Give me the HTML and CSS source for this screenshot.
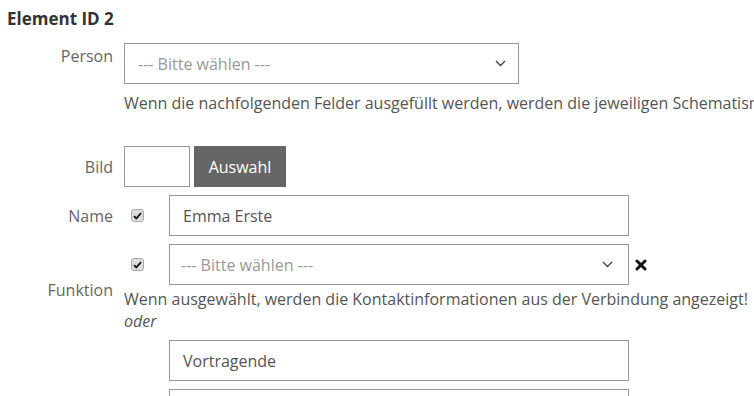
FILE: index.html
```html
<!DOCTYPE html>
<html>
  <head>
    <title>Element ID 2</title>
    <meta name="viewport" content="width=device-width, initial-scale=1">
    <link rel="stylesheet" href="styles.css">
  </head>
  <body>
    <h1 class="title">Element ID 2</h1>

    <div class="form-row top">
      <label class="label">Person</label>
      <div class="field">
        <div class="select person-select">
          <span class="placeholder">--- Bitte wählen ---</span>
          <svg class="chevron" width="11" height="7" viewBox="0 0 11 7"><path d="M1 1l4.5 4.5L10 1" fill="none" stroke="#444" stroke-width="1.4"/></svg>
        </div>
        <p class="help">Wenn die nachfolgenden Felder ausgefüllt werden, werden die jeweiligen Schematismus-Daten überschrieben.</p>
      </div>
    </div>

    <div class="form-row center bild-row">
      <label class="label">Bild</label>
      <div class="field image-field">
        <div class="image-box"></div>
        <button class="btn-select">Auswahl</button>
      </div>
    </div>

    <div class="form-row center">
      <label class="label">Name</label>
      <div class="field inline">
        <span class="check-cell"><span class="checkbox"><svg width="9" height="8" viewBox="0 0 9 8"><path d="M1 4.2l2.3 2.3L8 1.2" fill="none" stroke="#111" stroke-width="1.8"/></svg></span></span>
        <div class="input">Emma Erste</div>
      </div>
    </div>

    <div class="form-row center">
      <label class="label funktion">Funktion</label>
      <div class="field">
        <div class="inline">
          <span class="check-cell"><span class="checkbox"><svg width="9" height="8" viewBox="0 0 9 8"><path d="M1 4.2l2.3 2.3L8 1.2" fill="none" stroke="#111" stroke-width="1.8"/></svg></span></span>
          <div class="select wide-select">
            <span class="placeholder">--- Bitte wählen ---</span>
            <svg class="chevron" width="11" height="7" viewBox="0 0 11 7"><path d="M1 1l4.5 4.5L10 1" fill="none" stroke="#444" stroke-width="1.4"/></svg>
          </div>
          <svg class="clear" width="12" height="12" viewBox="0 0 12 12"><path d="M2 2l8 8M10 2l-8 8" stroke="#111" stroke-width="3" stroke-linecap="round"/></svg>
        </div>
        <p class="help tight">Wenn ausgewählt, werden die Kontaktinformationen aus der Verbindung angezeigt!</p>
        <p class="help or">oder</p>
      </div>
    </div>

    <div class="form-row extra">
      <span class="label"></span>
      <div class="field indent">
        <div class="input">Vortragende</div>
        <div class="input"></div>
      </div>
    </div>
  </body>
</html>
```

FILE: styles.css
```css
body {
    font-family: "Open Sans", Arial, sans-serif;
    font-size: 16px;
    color: #555;
    margin: 0;
    padding: 6px 0 0 7px;
    overflow: hidden;
}

.title {
    font-size: 17px;
    font-weight: bold;
    color: #333;
    margin: 0;
    line-height: 26px;
}

.form-row {
    display: grid;
    grid-template-columns: 106px 1fr;
    column-gap: 11px;
    margin-top: 8px;
}

.form-row.top {
    margin-top: 11px;
    align-items: start;
}

.form-row.top .label {
    padding-top: 2px;
}

.form-row.center {
    align-items: center;
}

.bild-row {
    margin-top: 32px !important;
}

.label {
    text-align: right;
    color: #666;
    line-height: 22px;
}

.label.funktion {
    padding-top: 3px;
}

.field {
    min-width: 0;
}

.inline {
    display: flex;
    align-items: center;
}

.select,
.input {
    box-sizing: border-box;
    height: 41px;
    border: 1px solid #999;
    background: #fff;
    display: flex;
    align-items: center;
    padding: 0 12px 0 13px;
}

.input {
    width: 460px;
    color: #555;
}

.person-select {
    width: 395px;
    justify-content: space-between;
}

.wide-select {
    width: 460px;
    justify-content: space-between;
    padding-left: 11px;
    padding-right: 15px;
}

.placeholder {
    color: #999;
}

.chevron {
    display: block;
}

.help {
    margin: 8px 0 0;
    line-height: 22px;
    white-space: nowrap;
}

.help.tight {
    margin-top: 3px;
}

.help.or {
    margin-top: 0;
    font-style: italic;
}

.image-field {
    display: flex;
    gap: 4px;
}

.image-box {
    box-sizing: border-box;
    width: 66px;
    height: 41px;
    border: 1px solid #999;
}

.btn-select {
    width: 92px;
    height: 41px;
    border: none;
    background: #666;
    color: #fff;
    font-family: inherit;
    font-size: 16px;
    padding: 0;
}

.check-cell {
    width: 45px;
    flex: none;
}

.checkbox {
    box-sizing: border-box;
    display: flex;
    align-items: center;
    justify-content: center;
    width: 13px;
    height: 13px;
    margin-left: 7px;
    border: 1px solid #aaa;
    border-radius: 3px;
    background: #ddd;
}

.clear {
    margin-left: 6px;
}

.extra {
    margin-top: 8px;
}

.indent {
    padding-left: 45px;
    display: flex;
    flex-direction: column;
    gap: 8px;
}
```
